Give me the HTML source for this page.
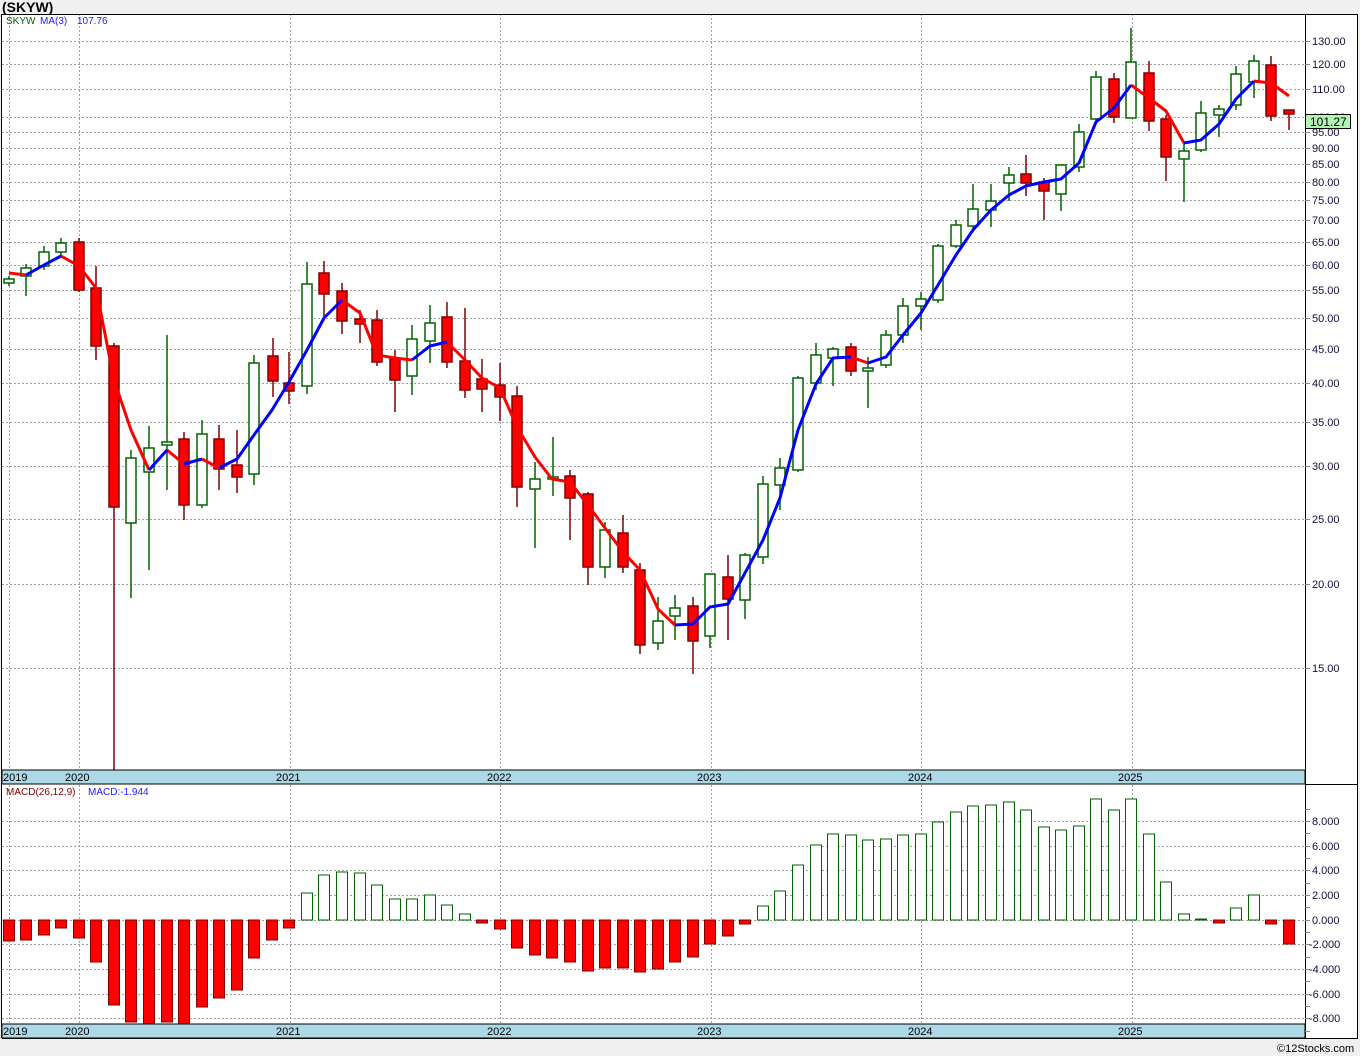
<!DOCTYPE html>
<html><head><meta charset="utf-8"><style>
html,body{margin:0;padding:0;background:#f0f0f0;}
svg{display:block;font-family:"Liberation Sans",sans-serif;}
</style></head><body>
<svg width="1360" height="1056" viewBox="0 0 1360 1056" xmlns="http://www.w3.org/2000/svg">
<rect x="0" y="0" width="1360" height="1056" fill="#f0f0f0"/>
<text x="2" y="12" font-size="14" font-weight="bold" fill="#000">(SKYW)</text>
<rect x="2" y="14" width="1356" height="1024" fill="#fff"/>
<g stroke="#a0a0a0" stroke-width="1" stroke-dasharray="2,2" fill="none">
<path d="M2 41.5H1305M2 64.5H1305M2 89.5H1305M2 117.5H1305M2 132.5H1305M2 148.5H1305M2 164.5H1305M2 182.5H1305M2 200.5H1305M2 220.5H1305M2 242.5H1305M2 265.5H1305M2 290.5H1305M2 318.5H1305M2 349.5H1305M2 383.5H1305M2 422.5H1305M2 466.5H1305M2 519.5H1305M2 584.5H1305M2 668.5H1305"/>
<path d="M9.5 14V770M79.5 14V770M290.5 14V770M500.5 14V770M711.5 14V770M921.5 14V770M1132.5 14V770"/>
<path d="M9.5 785V1024M79.5 785V1024M290.5 785V1024M500.5 785V1024M711.5 785V1024M921.5 785V1024M1132.5 785V1024"/>
<path d="M2 821.5H1305M2 846.5H1305M2 870.5H1305M2 895.5H1305M2 920.5H1305M2 944.5H1305M2 969.5H1305M2 994.5H1305M2 1018.5H1305"/>
</g>
<text x="6" y="24" font-size="10" fill="#006400">SKYW</text>
<text x="40" y="24" font-size="10" fill="#2020ff">MA(3)</text>
<text x="77" y="24" font-size="10" fill="#2020ff">107.76</text>
<path stroke="#006400" stroke-width="1.5" fill="none" d="M9 276V286M26 264V296M44 246V270M61 238V256M131 450V598M149 426V570M167 335V490M202 420V508M254 355V485M307 262V394M412 325V395M430 305V363M535 462V548M553 437V496M605 522V578M658 597V650M675 595V640M710 574V648M745 553V619M763 476V564M780 458V510M798 376V472M816 343V390M833 347V386M868 357V408M886 330V368M903 298V343M921 292V330M938 244V303M956 220V248M973 184V232M991 184V227M1009 167V201M1061 165V211M1079 124V172M1096 71V122M1131 28V118M1184 143V202M1201 101V152M1219 105V137M1236 66V110M1254 55V98"/>
<path stroke="#006400" stroke-width="1.5" fill="#fff" d="M4 279h10v4h-10zM21 268h10v8h-10zM39 252h10v14h-10zM56 243h10v9h-10zM126 458h10v65h-10zM144 448h10v24h-10zM162 442h10v3h-10zM197 434h10v71h-10zM249 363h10v111h-10zM302 284h10v102h-10zM407 339h10v37h-10zM425 323h10v18h-10zM530 479h10v10h-10zM548 477h10v2h-10zM600 530h10v37h-10zM653 621h10v22h-10zM670 608h10v8h-10zM705 574h10v62h-10zM740 555h10v45h-10zM758 484h10v73h-10zM775 468h10v17h-10zM793 378h10v92h-10zM811 355h10v28h-10zM828 349h10v9h-10zM863 368h10v3h-10zM881 335h10v30h-10zM898 306h10v29h-10zM916 299h10v7h-10zM933 246h10v54h-10zM951 225h10v21h-10zM968 209h10v17h-10zM986 201h10v9h-10zM1004 175h10v8h-10zM1056 165h10v29h-10zM1074 132h10v35h-10zM1091 77h10v42h-10zM1126 62h10v56h-10zM1179 151h10v8h-10zM1196 113h10v37h-10zM1214 109h10v6h-10zM1231 74h10v31h-10zM1249 61h10v21h-10z"/>
<path stroke="#800000" stroke-width="1.5" fill="none" d="M79 238V292M96 266V360M114 343V770M184 432V520M219 425V490M237 430V493M273 338V397M289 352V404M324 261V317M342 283V334M360 310V343M377 310V366M395 350V412M447 302V368M465 308V398M482 359V412M500 363V421M517 386V507M570 470V540M588 492V585M623 515V573M640 563V654M693 597V674M728 555V640M851 343V376M1026 155V196M1044 178V220M1114 73V123M1149 61V131M1166 115V181M1271 56V121M1289 110V130"/>
<path stroke="#800000" stroke-width="1.5" fill="#ff0000" d="M74 242h10v48h-10zM91 288h10v58h-10zM109 346h10v161h-10zM179 439h10v66h-10zM214 439h10v30h-10zM232 465h10v12h-10zM268 356h10v25h-10zM284 383h10v8h-10zM319 273h10v21h-10zM337 291h10v30h-10zM355 319h10v5h-10zM372 320h10v42h-10zM390 359h10v21h-10zM442 317h10v45h-10zM460 361h10v29h-10zM477 379h10v10h-10zM495 385h10v12h-10zM512 396h10v91h-10zM565 476h10v22h-10zM583 494h10v73h-10zM618 533h10v34h-10zM635 570h10v75h-10zM688 606h10v35h-10zM723 577h10v22h-10zM846 347h10v24h-10zM1021 174h10v9h-10zM1039 182h10v9h-10zM1109 79h10v38h-10zM1144 73h10v48h-10zM1161 119h10v38h-10zM1266 65h10v51h-10zM1284 110h10v4h-10z"/>
<path stroke="#ff0000" stroke-width="3" fill="none" stroke-linejoin="round" d="M9 273L26 275M61 256L79 266L96 288L114 380L131 430L149 470M167 450L184 464M202 459L219 468M342 300L360 313L377 355L395 358L412 360M447 342L465 360L482 378L500 388L517 427L535 457L552 479L570 482L588 505L605 528L623 552L640 570L658 609L675 625M851 357L868 363M1131 85L1149 98L1166 111L1184 143M1254 81L1271 83L1289 96"/>
<path stroke="#0000ff" stroke-width="3" fill="none" stroke-linejoin="round" d="M26 275L44 265L61 256M149 470L167 450M184 464L202 459M219 468L237 459L254 435L272 410L289 382L307 350L324 318L342 300M412 360L430 346L447 342M675 625L693 624L710 607L728 604L745 573L763 540L780 498L798 430L816 384L833 358L851 357M868 363L886 357L903 335L921 313L938 285L956 255L973 230L991 210L1009 195L1026 186L1044 182L1061 179L1079 163L1096 122L1114 108L1131 85M1184 143L1201 140L1219 124L1236 99L1254 81"/>
<text x="6" y="795" font-size="10" fill="#800000">MACD(26,12,9)</text>
<text x="88" y="795" font-size="10" fill="#2020ff">MACD:-1.944</text>
<path stroke="#800000" stroke-width="1" fill="#ff0000" d="M3.5 920h11v21h-11zM20.5 920h11v20h-11zM38.5 920h11v15h-11zM55.5 920h11v8h-11zM73.5 920h11v18h-11zM90.5 920h11v42h-11zM108.5 920h11v85h-11zM125.5 920h11v102h-11zM143.5 920h11v104h-11zM161.5 920h11v102h-11zM178.5 920h11v104h-11zM196.5 920h11v87h-11zM213.5 920h11v78h-11zM231.5 920h11v70h-11zM248.5 920h11v38h-11zM266.5 920h11v20h-11zM283.5 920h11v8h-11zM476.5 920h11v3h-11zM494.5 920h11v9h-11zM511.5 920h11v28h-11zM529.5 920h11v35h-11zM546.5 920h11v38h-11zM564.5 920h11v42h-11zM582.5 920h11v51h-11zM599.5 920h11v48h-11zM617.5 920h11v48h-11zM634.5 920h11v52h-11zM652.5 920h11v49h-11zM669.5 920h11v42h-11zM687.5 920h11v37h-11zM704.5 920h11v24h-11zM722.5 920h11v16h-11zM739.5 920h11v4h-11zM1213.5 920h11v3h-11zM1265.5 920h11v4h-11zM1283.5 920h11v24h-11z"/>
<path stroke="#006400" stroke-width="1" fill="#fff" d="M301.5 893h11v27h-11zM318.5 875h11v45h-11zM336.5 872h11v48h-11zM354.5 873h11v47h-11zM371.5 885h11v35h-11zM389.5 899h11v21h-11zM406.5 899h11v21h-11zM424.5 895h11v25h-11zM441.5 905h11v15h-11zM459.5 914h11v6h-11zM757.5 906h11v14h-11zM774.5 891h11v29h-11zM792.5 865h11v55h-11zM810.5 845h11v75h-11zM827.5 834h11v86h-11zM845.5 835h11v85h-11zM862.5 840h11v80h-11zM880.5 839h11v81h-11zM897.5 835h11v85h-11zM915.5 834h11v86h-11zM932.5 822h11v98h-11zM950.5 812h11v108h-11zM967.5 806h11v114h-11zM985.5 805h11v115h-11zM1003.5 802h11v118h-11zM1020.5 810h11v110h-11zM1038.5 827h11v93h-11zM1055.5 830h11v90h-11zM1073.5 826h11v94h-11zM1090.5 799h11v121h-11zM1108.5 810h11v110h-11zM1125.5 799h11v121h-11zM1143.5 834h11v86h-11zM1160.5 882h11v38h-11zM1178.5 914h11v6h-11zM1195.5 919h11v1h-11zM1230.5 908h11v12h-11zM1248.5 895h11v25h-11z"/>
<rect x="2" y="770" width="1303" height="14" fill="#add8e6" stroke="#000" stroke-width="1"/>
<rect x="2" y="1024" width="1303" height="14" fill="#add8e6" stroke="#000" stroke-width="1"/>
<g font-size="11" fill="#000">
<text x="3" y="781">2019</text><text x="65" y="781">2020</text><text x="276" y="781">2021</text><text x="487" y="781">2022</text><text x="697" y="781">2023</text><text x="908" y="781">2024</text><text x="1118" y="781">2025</text>
<text x="3" y="1035">2019</text><text x="65" y="1035">2020</text><text x="276" y="1035">2021</text><text x="487" y="1035">2022</text><text x="697" y="1035">2023</text><text x="908" y="1035">2024</text><text x="1118" y="1035">2025</text>
</g>
<rect x="1305" y="14" width="53" height="1024" fill="#fff"/>
<path d="M1.5 14V1038M2 14.5H1358M1305.5 14V1038M1357.5 14V1038M2 1038.5H1358" stroke="#000" stroke-width="1" fill="none"/>
<path d="M1305 784.5H1358" stroke="#000" stroke-width="1"/>
<path stroke="#888" stroke-width="1" d="M1305 41.5h5M1305 64.5h5M1305 89.5h5M1305 117.5h5M1305 132.5h5M1305 148.5h5M1305 164.5h5M1305 182.5h5M1305 200.5h5M1305 220.5h5M1305 242.5h5M1305 265.5h5M1305 290.5h5M1305 318.5h5M1305 349.5h5M1305 383.5h5M1305 422.5h5M1305 466.5h5M1305 519.5h5M1305 584.5h5M1305 668.5h5M1305 809.5h5M1305 821.5h5M1305 833.5h5M1305 846.5h5M1305 858.5h5M1305 870.5h5M1305 883.5h5M1305 895.5h5M1305 907.5h5M1305 920.5h5M1305 932.5h5M1305 944.5h5M1305 957.5h5M1305 969.5h5M1305 981.5h5M1305 994.5h5M1305 1006.5h5M1305 1018.5h5M1305 1031.5h5"/>
<g font-size="11" fill="#101040">
<text x="1312" y="45">130.00</text><text x="1312" y="68">120.00</text><text x="1312" y="93">110.00</text><text x="1312" y="136">95.00</text><text x="1312" y="152">90.00</text><text x="1312" y="168">85.00</text><text x="1312" y="186">80.00</text><text x="1312" y="204">75.00</text><text x="1312" y="224">70.00</text><text x="1312" y="246">65.00</text><text x="1312" y="269">60.00</text><text x="1312" y="294">55.00</text><text x="1312" y="322">50.00</text><text x="1312" y="353">45.00</text><text x="1312" y="387">40.00</text><text x="1312" y="426">35.00</text><text x="1312" y="470">30.00</text><text x="1312" y="523">25.00</text><text x="1312" y="588">20.00</text><text x="1312" y="672">15.00</text>
<text x="1312" y="825">8.000</text><text x="1312" y="850">6.000</text><text x="1312" y="874">4.000</text><text x="1312" y="899">2.000</text><text x="1312" y="924">0.000</text><text x="1309" y="948">-2.000</text><text x="1309" y="973">-4.000</text><text x="1309" y="998">-6.000</text><text x="1309" y="1022">-8.000</text>
</g>
<text x="1312" y="121" font-size="11" fill="#101040">100.00</text>
<rect x="1305.5" y="114.5" width="45" height="14" fill="#b4f5b4" stroke="#000" stroke-width="1"/>
<text x="1310" y="126" font-size="12" fill="#000">101.27</text>
<text x="1277" y="1052" font-size="11" fill="#000">©12Stocks.com</text>
</svg>
</body></html>
